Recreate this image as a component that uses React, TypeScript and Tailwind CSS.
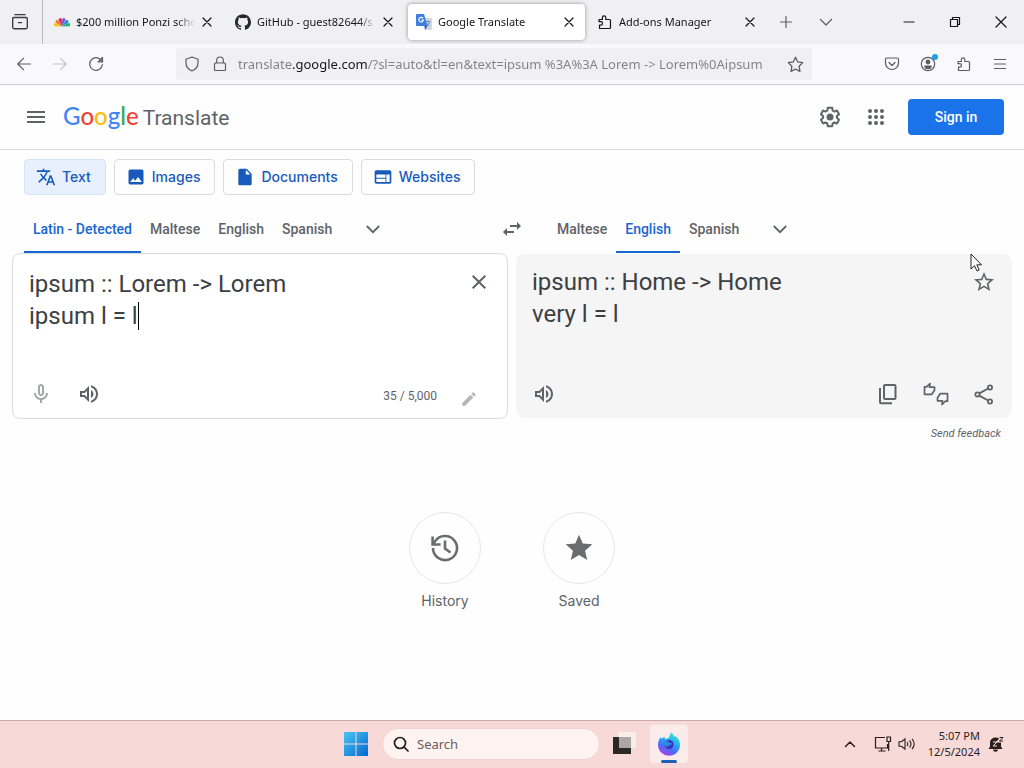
import { useState } from "react";
import type { ReactNode } from "react";
import {
  MdClose,
  MdEdit,
  MdImage,
  MdInsertDriveFile,
  MdMenu,
  MdOutlineMicNone,
  MdOutlineVolumeUp,
  MdStar,
  MdStarBorder,
  MdSwapHoriz,
  MdTranslate,
  MdWeb,
} from "react-icons/md";
import { SiGithub } from "react-icons/si";

type StrokeProps = { children: ReactNode; className?: string };

function Stroke({ children, className = "size-4" }: StrokeProps) {
  return (
    <svg
      viewBox="0 0 16 16"
      className={className}
      fill="none"
      stroke="currentColor"
      strokeWidth="1.2"
      strokeLinecap="round"
      strokeLinejoin="round"
      aria-hidden="true"
    >
      {children}
    </svg>
  );
}

const puzzlePath =
  "M2 5.5h3.400V3.600a1.700 1.700 0 0 1 3.400 0v1.900h3.700a1 1 0 0 1 1 1v7a1 1 0 0 1-1 1H2.500v-3.400h1.300a1.700 1.700 0 0 0 0-3.400H2z";

function PeacockIcon() {
  const feathers = [
    { color: "#f5c518", angle: -75 },
    { color: "#f0762b", angle: -45 },
    { color: "#e0244e", angle: -15 },
    { color: "#7a4fc4", angle: 15 },
    { color: "#1e88e5", angle: 45 },
    { color: "#19b35a", angle: 75 },
  ];
  return (
    <svg viewBox="0 0 16 16" className="size-4 shrink-0" aria-hidden="true">
      {feathers.map((f) => (
        <path
          key={f.color}
          d="M8 12.500L6.500 6a1.600 1.600 0 1 1 3 0z"
          fill={f.color}
          transform={`rotate(${f.angle} 8 12.5)`}
        />
      ))}
    </svg>
  );
}

function TranslateFavicon() {
  return (
    <svg viewBox="0 0 16 16" className="size-4 shrink-0" aria-hidden="true">
      <path d="M6 4h9a1 1 0 0 1 1 1v10a1 1 0 0 1-1 1H9z" fill="#d5d9de" />
      <path
        d="M9.300 7.600h5M11.800 6.600v1M13.600 7.600c-.4 2-1.800 3.400-3 4.200M10.600 9c.7 1.400 1.800 2.400 3 3"
        stroke="#5f8fc9"
        strokeWidth="1"
        fill="none"
      />
      <path d="M1 0h7l3.500 12H1a1 1 0 0 1-1-1V1a1 1 0 0 1 1-1z" fill="#3f7de0" />
      <path d="M8.500 12h3L9 16z" fill="#2a56c6" />
      <path d="M7 4.300A2.300 2.300 0 1 0 7.400 6H5.300" stroke="#fff" strokeWidth="1.100" fill="none" />
    </svg>
  );
}

const browserTabs = [
  { title: "$200 million Ponzi sche", icon: <PeacockIcon />, active: false },
  {
    title: "GitHub - guest82644/s",
    icon: <SiGithub className="size-4 shrink-0 text-[#24292f]" />,
    active: false,
  },
  { title: "Google Translate", icon: <TranslateFavicon />, active: true },
  {
    title: "Add-ons Manager",
    icon: (
      <Stroke className="size-4 shrink-0 text-[#15141a]">
        <path d={puzzlePath} />
      </Stroke>
    ),
    active: false,
  },
];

function TabStrip() {
  return (
    <div className="flex h-11 items-center bg-[#f0f0f4] text-[#15141a]">
      <button
        aria-label="Recent browsing"
        className="flex h-full w-[43px] shrink-0 items-center justify-center border-r border-[#b8b8c0] pr-0.5 text-[#3a3944]"
      >
        <Stroke className="size-[18px]">
          <path d="M3.500 1.500h9M2.500 4h11a1 1 0 0 1 1 1v7.500a1.500 1.500 0 0 1-1.500 1.500H3a1.500 1.500 0 0 1-1.500-1.500V5a1 1 0 0 1 1-1zM6.500 8.500h3" />
        </Stroke>
      </button>
      <div role="tablist" className="ml-[3px] flex gap-1">
        {browserTabs.map((tab) => (
          <div
            key={tab.title}
            className={
              tab.active
                ? "flex h-9 w-[177px] items-center rounded bg-white pl-2 pr-1 shadow-[0_0_4px_rgba(0,0,0,0.4)]"
                : "flex h-9 w-[177px] items-center rounded pl-2 pr-1"
            }
          >
            {tab.icon}
            <button
              role="tab"
              aria-selected={tab.active}
              className="ml-1.5 min-w-0 flex-1 whitespace-nowrap mask-r-from-85% text-left text-[11px] leading-5"
            >
              {tab.title}
            </button>
            <button aria-label={"Close " + tab.title} className="flex size-6 shrink-0 items-center justify-center">
              <Stroke className="size-4">
                <path d="M4 4l8 8M12 4l-8 8" />
              </Stroke>
            </button>
          </div>
        ))}
      </div>
      <button aria-label="New tab" className="flex h-full w-10 shrink-0 items-center justify-center text-[#5b5b66]">
        <Stroke>
          <path d="M8 2.500v11M2.500 8h11" />
        </Stroke>
      </button>
      <button aria-label="List all tabs" className="flex h-full w-10 shrink-0 items-center justify-center text-[#5b5b66]">
        <Stroke>
          <path d="M2.500 5.500L8 11l5.500-5.500" />
        </Stroke>
      </button>
      <div className="ml-auto flex h-full">
        <button aria-label="Minimize" className="flex w-[46px] items-center justify-center">
          <Stroke className="size-4">
            <path d="M3 8h10" />
          </Stroke>
        </button>
        <button aria-label="Restore" className="flex w-[46px] items-center justify-center">
          <Stroke className="size-4">
            <path d="M3.500 5.500h7v7h-7zM5.500 5.500v-2h7v7h-2" />
          </Stroke>
        </button>
        <button aria-label="Close window" className="flex w-[46px] items-center justify-center">
          <Stroke className="size-4">
            <path d="M3 3l10 10M13 3L3 13" />
          </Stroke>
        </button>
      </div>
    </div>
  );
}

function NavBar() {
  const button = "relative flex size-9 shrink-0 items-center justify-center text-[#5b5b66]";
  return (
    <div className="flex h-[41px] items-center border-b border-[#cfcfd4] bg-[#f9f9fb] px-1.5">
      <button aria-label="Back" className={button}>
        <Stroke>
          <path d="M14.500 8H1.800M7.500 2.300L1.800 8l5.700 5.700" />
        </Stroke>
      </button>
      <button aria-label="Forward" className="flex size-9 shrink-0 items-center justify-center text-[#c3c3c9]">
        <Stroke>
          <path d="M1.500 8h12.700M8.500 2.300L14.200 8l-5.700 5.700" />
        </Stroke>
      </button>
      <button aria-label="Reload" className={button}>
        <Stroke>
          <path d="M13.800 5.500A6.300 6.300 0 1 0 14.300 8.500M14.500 1.500v4.500H10z" />
        </Stroke>
      </button>
      <div className="mx-[62px] flex h-8 min-w-0 flex-1 items-center rounded bg-[#f0f0f2] px-2 text-[#5b5b66]">
        <Stroke className="size-4 shrink-0">
          <path d="M8 1l6 2.200v3.600c0 3.800-2.500 6.800-6 8.200-3.500-1.400-6-4.400-6-8.200V3.200z" />
        </Stroke>
        <Stroke className="ml-3 size-4 shrink-0">
          <path d="M3.500 7h9a1 1 0 0 1 1 1v5.500a1 1 0 0 1-1 1h-9a1 1 0 0 1-1-1V8a1 1 0 0 1 1-1zM4.700 7V4.300a3.300 3.300 0 0 1 6.600 0V7" />
        </Stroke>
        <input
          aria-label="Address"
          defaultValue="translate.google.com/?sl=auto&tl=en&text=ipsum %3A%3A Lorem -> Lorem%0Aipsum"
          className="ml-2.5 min-w-0 flex-1 bg-[linear-gradient(90deg,#808088_55px,#15141a_55px,#15141a_129px,#808088_129px)] bg-clip-text text-[13px] leading-5 text-transparent outline-none"
        />
        <button aria-label="Bookmark this page" className="ml-3 shrink-0">
          <Stroke className="size-[17px]">
            <path d="M8 1.200l2.100 4.400 4.700.6-3.400 3.400.8 4.900L8 12.200l-4.200 2.300.8-4.900L1.200 6.200l4.700-.6z" />
          </Stroke>
        </button>
      </div>
      <button aria-label="Save to Pocket" className={button}>
        <Stroke>
          <path d="M3 2h10a1.500 1.500 0 0 1 1.500 1.500V7a6.500 6.500 0 0 1-13 0V3.500A1.500 1.500 0 0 1 3 2zM5 6.500l3 3 3-3" />
        </Stroke>
      </button>
      <button aria-label="Account" className={button}>
        <Stroke>
          <circle cx="8" cy="8" r="6.700" />
          <circle cx="8" cy="6" r="1.800" fill="currentColor" />
          <path d="M4.800 10h6.400a3.200 2.500 0 0 1-6.400 0z" fill="currentColor" />
        </Stroke>
        <span className="absolute right-2 top-2 size-1.5 rounded-full bg-[#1ea0e6]" />
      </button>
      <button aria-label="Extensions" className={button}>
        <Stroke>
          <path d={puzzlePath} />
        </Stroke>
      </button>
      <button aria-label="Application menu" className={button}>
        <Stroke>
          <path d="M2.500 3.500h11M2.500 8h11M2.500 12.500h11" />
        </Stroke>
      </button>
    </div>
  );
}

function PageHeader() {
  return (
    <header className="flex h-[65px] items-center border-b border-[#dadce0] pl-6 pr-5">
      <button aria-label="Main menu" className="text-[#5f6368]">
        <MdMenu className="size-6" />
      </button>
      <a href="#home" className="ml-[15px] flex items-baseline gap-1 leading-8 text-[#5f6368]">
        <span className="font-[Lato,sans-serif] text-2xl font-medium">
          <span className="text-[#4285f4]">G</span>
          <span className="text-[#ea4335]">o</span>
          <span className="text-[#fbbc05]">o</span>
          <span className="text-[#4285f4]">g</span>
          <span className="text-[#34a853]">l</span>
          <span className="text-[#ea4335]">e</span>
        </span>
        <span className="text-[21px]">Translate</span>
      </a>
      <button aria-label="Settings" className="ml-auto text-[#5f6368]">
        <svg viewBox="0 0 24 24" className="size-6" fill="currentColor" aria-hidden="true">
          <path d="M13.850 22.250h-3.700c-.74 0-1.360-.54-1.450-1.270l-.27-1.890c-.27-.14-.53-.29-.79-.46l-1.800.72c-.7.260-1.470-.03-1.810-.65L2.200 15.530c-.35-.66-.2-1.440.36-1.880l1.530-1.190c-.01-.15-.02-.3-.02-.46 0-.15.010-.31.020-.46l-1.520-1.190c-.59-.45-.74-1.260-.37-1.880l1.850-3.190c.34-.62 1.110-.9 1.790-.63l1.810.73c.26-.17.52-.32.78-.46l.27-1.910c.09-.7.710-1.250 1.440-1.250h3.700c.74 0 1.360.54 1.450 1.270l.27 1.890c.27.140.53.290.79.460l1.800-.72c.71-.26 1.480.03 1.820.65l1.840 3.180c.36.660.2 1.440-.36 1.880l-1.520 1.190c.01.150.02.3.02.460s-.01.310-.02.460l1.520 1.190c.56.450.72 1.230.37 1.860l-1.860 3.220c-.34.620-1.110.9-1.800.63l-1.800-.72c-.26.170-.52.320-.78.460l-.27 1.910c-.1.680-.72 1.220-1.460 1.220zm-3.230-2h2.760l.37-2.550.53-.22c.44-.18.880-.44 1.340-.78l.45-.34 2.380.96 1.380-2.400-2.030-1.580.07-.56c.03-.26.060-.51.060-.78s-.03-.53-.06-.78l-.07-.56 2.030-1.580-1.390-2.400-2.390.96-.45-.35c-.42-.32-.87-.58-1.330-.77l-.52-.22-.37-2.550h-2.760l-.37 2.550-.53.210c-.44.190-.88.440-1.340.79l-.45.330-2.380-.95-1.390 2.390 2.030 1.580-.07.560a7 7 0 0 0-.06.790c0 .26.020.53.060.78l.07.560-2.030 1.580 1.380 2.400 2.390-.96.450.35c.43.330.86.580 1.330.77l.53.220z" />
          <circle cx="12" cy="12" r="3.500" />
        </svg>
      </button>
      <button aria-label="Google apps" className="ml-[22px] text-[#5f6368]">
        <svg viewBox="0 0 24 24" className="size-6" fill="currentColor" aria-hidden="true">
          {[6, 12, 18].map((cy) => [6, 12, 18].map((cx) => <circle key={`${cx}-${cy}`} cx={cx} cy={cy} r="2" />))}
        </svg>
      </button>
      <a
        href="#signin"
        className="ml-5 flex h-9 w-24 items-center justify-center rounded bg-[#1a73e8] text-sm font-medium text-white"
      >
        Sign in
      </a>
    </header>
  );
}

const modes = [
  { label: "Text", icon: MdTranslate },
  { label: "Images", icon: MdImage },
  { label: "Documents", icon: MdInsertDriveFile },
  { label: "Websites", icon: MdWeb },
];

function ModeButtons() {
  return (
    <nav aria-label="Translation types" className="flex gap-2 px-6 pt-[9px]">
      {modes.map(({ label, icon: Icon }, i) => (
        <button
          key={label}
          className={
            i === 0
              ? "flex h-9 items-center gap-1.5 rounded border border-[#d2e3fc] bg-[#e8f0fe] pl-[11px] pr-3.5 font-[Inter,sans-serif] text-sm font-medium text-[#185abc]"
              : "flex h-9 items-center gap-1.5 rounded border border-[#dadce0] pl-[11px] pr-3.5 font-[Inter,sans-serif] text-sm font-medium text-[#185abc]"
          }
        >
          <Icon className="size-5" />
          {label}
        </button>
      ))}
    </nav>
  );
}

type LanguageTabsProps = { label: string; languages: string[]; selected: string };

function LanguageTabs({ label, languages, selected }: LanguageTabsProps) {
  return (
    <div role="tablist" aria-label={label} className="flex h-12 flex-1 pl-3 text-sm font-medium">
      {languages.map((language) => (
        <button
          key={language}
          role="tab"
          aria-selected={language === selected}
          className={
            language === selected
              ? "border-b-2 border-[#1967d2] px-[9px] pt-0.5 text-[#1967d2]"
              : "border-b-2 border-transparent px-[9px] pt-0.5 text-[#5f6368]"
          }
        >
          {language}
        </button>
      ))}
      <button aria-label={"More " + label} className="ml-2 flex w-12 items-center justify-center text-[#5f6368]">
        <svg viewBox="0 0 24 24" className="size-6" fill="none" stroke="currentColor" strokeWidth="1.800" aria-hidden="true">
          <path d="M5.800 9l6.200 6.200L18.200 9" />
        </svg>
      </button>
    </div>
  );
}

function RateIcon() {
  return (
    <svg
      viewBox="0 0 26 24"
      className="h-6 w-[26px]"
      fill="none"
      stroke="currentColor"
      strokeWidth="1.700"
      strokeLinejoin="round"
      aria-hidden="true"
    >
      <path d="M1.500 4.800V12.300H8.800L11.500 8.200V5.200H6.500L7 1.500L3.500 4.800z" />
      <path d="M24.500 19.200V11.700H17.200L14.500 15.800V18.800H19.500L19 22.500L22.500 19.200z" />
    </svg>
  );
}

function Panels() {
  const [source, setSource] = useState("ipsum :: Lorem -> Lorem\nipsum l = l");
  const iconButton = "flex size-12 shrink-0 items-center justify-center text-[#5f6368]";
  return (
    <div className="grid grid-cols-2 items-start gap-2 px-3">
      <section aria-label="Source text" className="flex flex-col rounded-lg border border-[#dadce0] bg-white">
        <div className="flex items-start pl-4 pt-3.5">
          <div className="relative min-w-0 flex-1">
            <textarea
              aria-label="Source text"
              value={source}
              onChange={(e) => setSource(e.target.value)}
              rows={3}
              className="block w-full resize-none overflow-hidden text-2xl leading-8 text-[#3c4043] outline-none"
            />
            <span className="absolute left-[109px] top-[34px] h-7 w-px bg-black" />
          </div>
          <button
            aria-label="Clear source text"
            className="-mt-2.5 mr-1 flex size-12 shrink-0 items-center justify-center text-[#5f6368]"
          >
            <MdClose className="size-6" />
          </button>
        </div>
        <div className="mt-1.5 flex items-center pl-1 pr-3.5">
          <button aria-label="Translate by voice" className="flex size-12 items-center justify-center text-[#a5a8ab]">
            <MdOutlineMicNone className="size-6" />
          </button>
          <button aria-label="Listen to source text" className={iconButton}>
            <MdOutlineVolumeUp className="size-6" />
          </button>
          <span className="ml-auto pt-1 text-xs text-[#5f6368]">35 / 5,000</span>
          <button
            aria-label="Select input tool"
            className="ml-2 flex size-12 items-center justify-center pt-2.5 text-[#b4b6b9]"
          >
            <MdEdit className="size-[18px]" />
          </button>
        </div>
      </section>
      <div>
        <section aria-label="Translation" className="mt-px flex flex-col rounded-lg bg-[#f5f5f5]">
          <div className="flex items-start pl-4 pt-3">
            <p className="min-h-24 min-w-0 flex-1 text-2xl leading-8 text-[#3c4043]">
              ipsum :: Home -&gt; Home
              <br />
              very l = l
            </p>
            <button
              aria-label="Save translation"
              className="-mt-2 mr-1 flex size-12 shrink-0 items-center justify-center text-[#5f6368]"
            >
              <MdStarBorder className="size-6" />
            </button>
          </div>
          <div className="mt-2 flex items-center px-1">
            <button aria-label="Listen to translation" className={iconButton}>
              <MdOutlineVolumeUp className="size-6" />
            </button>
            <button
              aria-label="Copy translation"
              className="ml-auto flex size-12 items-center justify-center text-[#5f6368]"
            >
              <svg viewBox="0 0 24 24" className="size-6" fill="currentColor" aria-hidden="true">
                <path d="M18.500 2H9a2 2 0 0 0-2 2v12a2 2 0 0 0 2 2h9.500a2 2 0 0 0 2-2V4a2 2 0 0 0-2-2zm0 14H9V4h9.500zM3 6h2v14.200h11v2H5a2 2 0 0 1-2-2z" />
              </svg>
            </button>
            <button aria-label="Rate this translation" className={iconButton}>
              <RateIcon />
            </button>
            <button aria-label="Share translation" className={iconButton}>
              <svg
                viewBox="0 0 24 24"
                className="size-6"
                fill="none"
                stroke="currentColor"
                strokeWidth="1.800"
                aria-hidden="true"
              >
                <circle cx="5.500" cy="12.500" r="2.100" />
                <circle cx="18" cy="5.500" r="2.100" />
                <circle cx="18" cy="19.500" r="2.100" />
                <path d="M7.300 11.400l8.900-4.900M7.300 13.600l8.900 4.900" />
              </svg>
            </button>
          </div>
        </section>
        <div className="flex justify-end px-[11px] pt-2">
          <button className="text-[11px] italic leading-4 text-[#5f6368]">Send feedback</button>
        </div>
      </div>
    </div>
  );
}

function HistoryIcon({ className }: { className?: string }) {
  return (
    <svg
      viewBox="0 0 32 32"
      className={className}
      fill="none"
      stroke="currentColor"
      strokeWidth="2.600"
      aria-hidden="true"
    >
      <path d="M4 16A12 12 0 1 0 6 9.400L4.500 11.700" />
      <path d="M3.600 4.500v8h8" />
      <path d="M16 8.500v8l5.500 4" />
    </svg>
  );
}

function Shortcuts() {
  const items = [
    { label: "History", icon: HistoryIcon },
    { label: "Saved", icon: MdStar },
  ];
  return (
    <div className="mt-[70px] flex justify-center gap-[62px]">
      {items.map(({ label, icon: Icon }) => (
        <button
          key={label}
          className="flex w-[72px] flex-col items-center gap-[7px] font-[Inter,sans-serif] text-sm leading-5 text-[#5f6368]"
        >
          <span className="flex size-[72px] items-center justify-center rounded-full border border-[#e4e6e9] text-[#6b6c6f]">
            <Icon className="size-8" />
          </span>
          {label}
        </button>
      ))}
    </div>
  );
}

function FirefoxLogo() {
  return (
    <svg viewBox="0 0 24 24" className="size-6" aria-hidden="true">
      <defs>
        <linearGradient id="flame" x1="0.800" y1="0" x2="0.300" y2="1">
          <stop offset="0" stopColor="#4ff0c0" />
          <stop offset=".35" stopColor="#20b8f0" />
          <stop offset=".7" stopColor="#4a6cf5" />
          <stop offset="1" stopColor="#b43df0" />
        </linearGradient>
      </defs>
      <path
        d="M14 .5c2 1.300 3.200 3 3.800 4.500.4-.3.500-.8.500-1.300 3 2.300 4.700 5.500 4.700 9A11 11 0 0 1 1 13c0-3.200 1-6 2.800-8l.7 2C5.500 5.800 6.500 5.300 7.500 5L8 7c1.800-.3 3-.5 3.800-1.200C12.800 4.500 12.600 2.300 14 .5z"
        fill="url(#flame)"
      />
      <circle cx="12" cy="12.500" r="4.600" fill="#4430b8" />
      <path
        d="M6.500 10c2-1.500 4-1 5.500.3 1 .8 2.300.9 3.200.9-.8 1.800-2 2-3.400 2.100-1 .1-1.200 1-.2 1.700-2.700.4-5-1.500-5.100-5z"
        fill="#2a8bea"
      />
    </svg>
  );
}

function Taskbar() {
  return (
    <footer className="grid h-12 grid-cols-[1fr_auto_1fr] items-center border-t border-[#c9a9aa] bg-[#f7d9d7] pb-px">
      <div />
      <div className="flex items-center">
        <button aria-label="Start" className="flex size-10 items-center justify-center">
          <svg viewBox="0 0 24 24" className="size-6" aria-hidden="true">
            <defs>
              <linearGradient id="panes" x1="0" y1="0" x2="1" y2="1">
                <stop offset="0" stopColor="#4cc4f5" />
                <stop offset="1" stopColor="#0069cf" />
              </linearGradient>
            </defs>
            <path
              d="M0 0h11.500v11.500H0zM12.500 0H24v11.500H12.500zM0 12.500h11.500V24H0zM12.500 12.500H24V24H12.500z"
              fill="url(#panes)"
            />
          </svg>
        </button>
        <label className="ml-1.5 flex h-8 w-[218px] items-center rounded-full border border-[#efd4d3] bg-[#fff3f2] pl-2.5">
          <Stroke className="size-4 shrink-0 text-[#1f1b1b]">
            <circle cx="7" cy="7" r="5.500" strokeWidth="1.700" />
            <path d="M11 11l4 4" strokeWidth="1.700" />
          </Stroke>
          <input
            aria-label="Search"
            placeholder="Search"
            className="ml-2 min-w-0 flex-1 text-[13px] leading-5 outline-none placeholder:text-[#6a5c5c]"
          />
        </label>
        <button aria-label="Task view" className="ml-1 flex size-10 items-center justify-center">
          <svg viewBox="0 0 24 24" className="size-6" aria-hidden="true">
            <rect x="6" y="0" width="18" height="16" rx="2" fill="#fbeeea" />
            <rect x="1" y="5" width="18" height="17" fill="#2c2827" />
            <rect x="7" y="5" width="12" height="11" fill="#aaa7a4" />
          </svg>
        </button>
        <button
          aria-label="Firefox"
          className="relative ml-1.5 flex size-[38px] items-center justify-center rounded bg-[#fbecec]"
        >
          <FirefoxLogo />
          <span className="absolute inset-x-[11px] bottom-0 h-[3px] rounded-full bg-[#1f62b5]" />
        </button>
      </div>
      <div className="flex items-center justify-end pr-5 text-[#2a1f1f]">
        <button aria-label="Show hidden icons" className="mr-4">
          <Stroke className="size-4">
            <path d="M3.500 10.500L8 6l4.500 4.500" strokeWidth="1.500" />
          </Stroke>
        </button>
        <button aria-label="Network and volume" className="flex gap-1.5">
          <svg
            viewBox="0 0 18 16"
            className="h-4 w-[18px]"
            fill="none"
            stroke="currentColor"
            strokeWidth="1.200"
            aria-hidden="true"
          >
            <path d="M11 1.500H1.500v10.500h12V8M4.500 15h7M7.500 12v3M13 1h3.500v4.500H13zM14.700 5.500V15" />
          </svg>
          <svg
            viewBox="0 0 18 16"
            className="h-4 w-[18px]"
            fill="none"
            stroke="currentColor"
            strokeWidth="1.100"
            aria-hidden="true"
          >
            <path d="M1 5.800h2.500L7 3v10L3.500 10.200H1zM9 6q1.600 2 0 4M11.500 4.300q3 3.700 0 7.400M14 2.800q4.400 5.200 0 10.400" />
          </svg>
        </button>
        <time className="ml-3 text-right text-[11px] leading-4">
          5:07 PM
          <br />
          12/5/2024
        </time>
        <button aria-label="Notifications" className="ml-2">
          <svg viewBox="0 0 16 16" className="size-4" aria-hidden="true">
            <path
              d="M7.500 1.500A5.500 5 0 0 0 2 6.500v4L.5 13h14L13 10.500v-4a5.500 5 0 0 0-5.500-5zM5 13.500a2.500 2.300 0 0 0 5 0z"
              fill="currentColor"
            />
            <path d="M5 6h4L5 10h4" stroke="#f7d9d7" fill="none" />
            <path d="M11 1h4l-4 4h4" stroke="#f7d9d7" strokeWidth="3" fill="none" />
            <path d="M11.500 1.500h3.500L11.500 5H15" stroke="currentColor" fill="none" />
          </svg>
        </button>
      </div>
    </footer>
  );
}

export default function App() {
  return (
    <div className="relative flex min-h-screen flex-col bg-white font-['Noto_Sans',sans-serif]">
      <TabStrip />
      <NavBar />
      <main className="flex-1 bg-[#fefefe] pb-10 font-[Roboto,sans-serif]">
        <PageHeader />
        <ModeButtons />
        <div className="mt-2.5 flex px-3">
          <LanguageTabs
            label="source languages"
            languages={["Latin - Detected", "Maltese", "English", "Spanish"]}
            selected="Latin - Detected"
          />
          <button
            aria-label="Swap languages"
            className="flex size-12 shrink-0 items-center justify-center text-[#5f6368]"
          >
            <MdSwapHoriz className="size-6" />
          </button>
          <LanguageTabs label="target languages" languages={["Maltese", "English", "Spanish"]} selected="English" />
        </div>
        <Panels />
        <Shortcuts />
      </main>
      <Taskbar />
      <svg viewBox="0 0 12 19" className="absolute left-[970px] top-[253px] h-[19px] w-3" aria-hidden="true">
        <path d="M1 1v15l3.500-3.300L7 18l2.200-1-2.400-5.200H11.500z" fill="#fff" stroke="#222" strokeWidth="1" />
      </svg>
    </div>
  );
}
